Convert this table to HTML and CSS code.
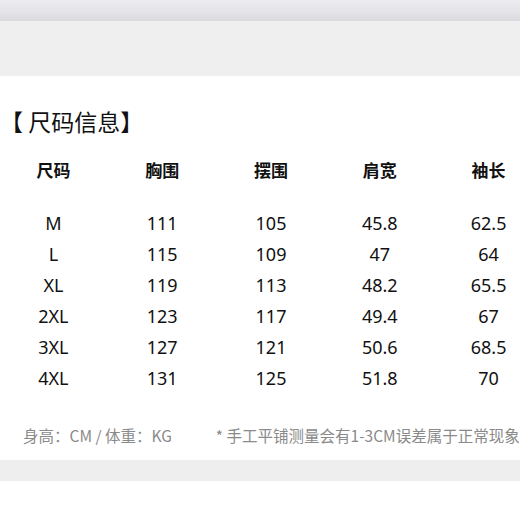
FILE: index.html
```html
<!DOCTYPE html>
<html lang="zh">
<head>
<meta charset="utf-8">
<title>尺码信息</title>
<link rel="stylesheet" href="styles.css">
</head>
<body>
<div class="topbar"></div>
<div class="band"></div>
<section class="panel">
  <h2 class="title">【 尺码信息】</h2>
  <div class="table">
    <div class="row head">
      <span>尺码</span><span>胸围</span><span>摆围</span><span>肩宽</span><span>袖长</span>
    </div>
    <div class="body">
      <div class="row"><span>M</span><span>111</span><span>105</span><span>45.8</span><span>62.5</span></div>
      <div class="row"><span>L</span><span>115</span><span>109</span><span>47</span><span>64</span></div>
      <div class="row"><span>XL</span><span>119</span><span>113</span><span>48.2</span><span>65.5</span></div>
      <div class="row"><span>2XL</span><span>123</span><span>117</span><span>49.4</span><span>67</span></div>
      <div class="row"><span>3XL</span><span>127</span><span>121</span><span>50.6</span><span>68.5</span></div>
      <div class="row"><span>4XL</span><span>131</span><span>125</span><span>51.8</span><span>70</span></div>
    </div>
  </div>
  <div class="foot">
    <span class="unit">身高：CM / 体重：KG</span>
    <span class="note">* 手工平铺测量会有1-3CM误差属于正常现象</span>
  </div>
</section>
<div class="gap"></div>
<div class="bottom"></div>
</body>
</html>
```
FILE: styles.css
```css
html, body {
  margin: 0;
  padding: 0;
  background: #ffffff;
  overflow: hidden;
}
body {
  width: 520px;
  height: 520px;
  font-family: "Noto Sans", "Noto Sans CJK SC", sans-serif;
  color: #111111;
}
.topbar {
  height: 21px;
  background: linear-gradient(#ededf1, #e4e4e8 60%, #d9d9de);
}
.band {
  height: 55px;
  background: #efefef;
}
.panel {
  background: #ffffff;
  height: 384px;
  box-sizing: border-box;
  padding-top: 30px;
  overflow: hidden;
}
.title {
  margin: 0;
  padding-left: 0;
  font-family: "Noto Sans CJK SC", sans-serif;
  font-size: 23px;
  font-weight: 400;
  line-height: 30px;
  height: 30px;
  color: #111111;
}
.table {
  width: 544px;
  margin-left: -1px;
  margin-top: 18px;
}
.row {
  display: grid;
  grid-template-columns: repeat(5, 1fr);
  height: 31px;
  line-height: 31px;
  text-align: center;
  font-size: 18px;
  white-space: nowrap;
}
.row.head {
  font-family: "Noto Sans CJK SC", sans-serif;
  font-size: 17px;
  font-weight: 700;
}
.body {
  margin-top: 23px;
}
.foot {
  display: flex;
  gap: 44px;
  padding-left: 23px;
  margin-top: 31px;
  font-family: "Noto Sans CJK SC", sans-serif;
  font-size: 15.5px;
  line-height: 20px;
  color: #8a8a8a;
  white-space: nowrap;
}
.gap {
  height: 21px;
  background: #eeeeee;
}
.bottom {
  height: 39px;
  background: #ffffff;
}
```
